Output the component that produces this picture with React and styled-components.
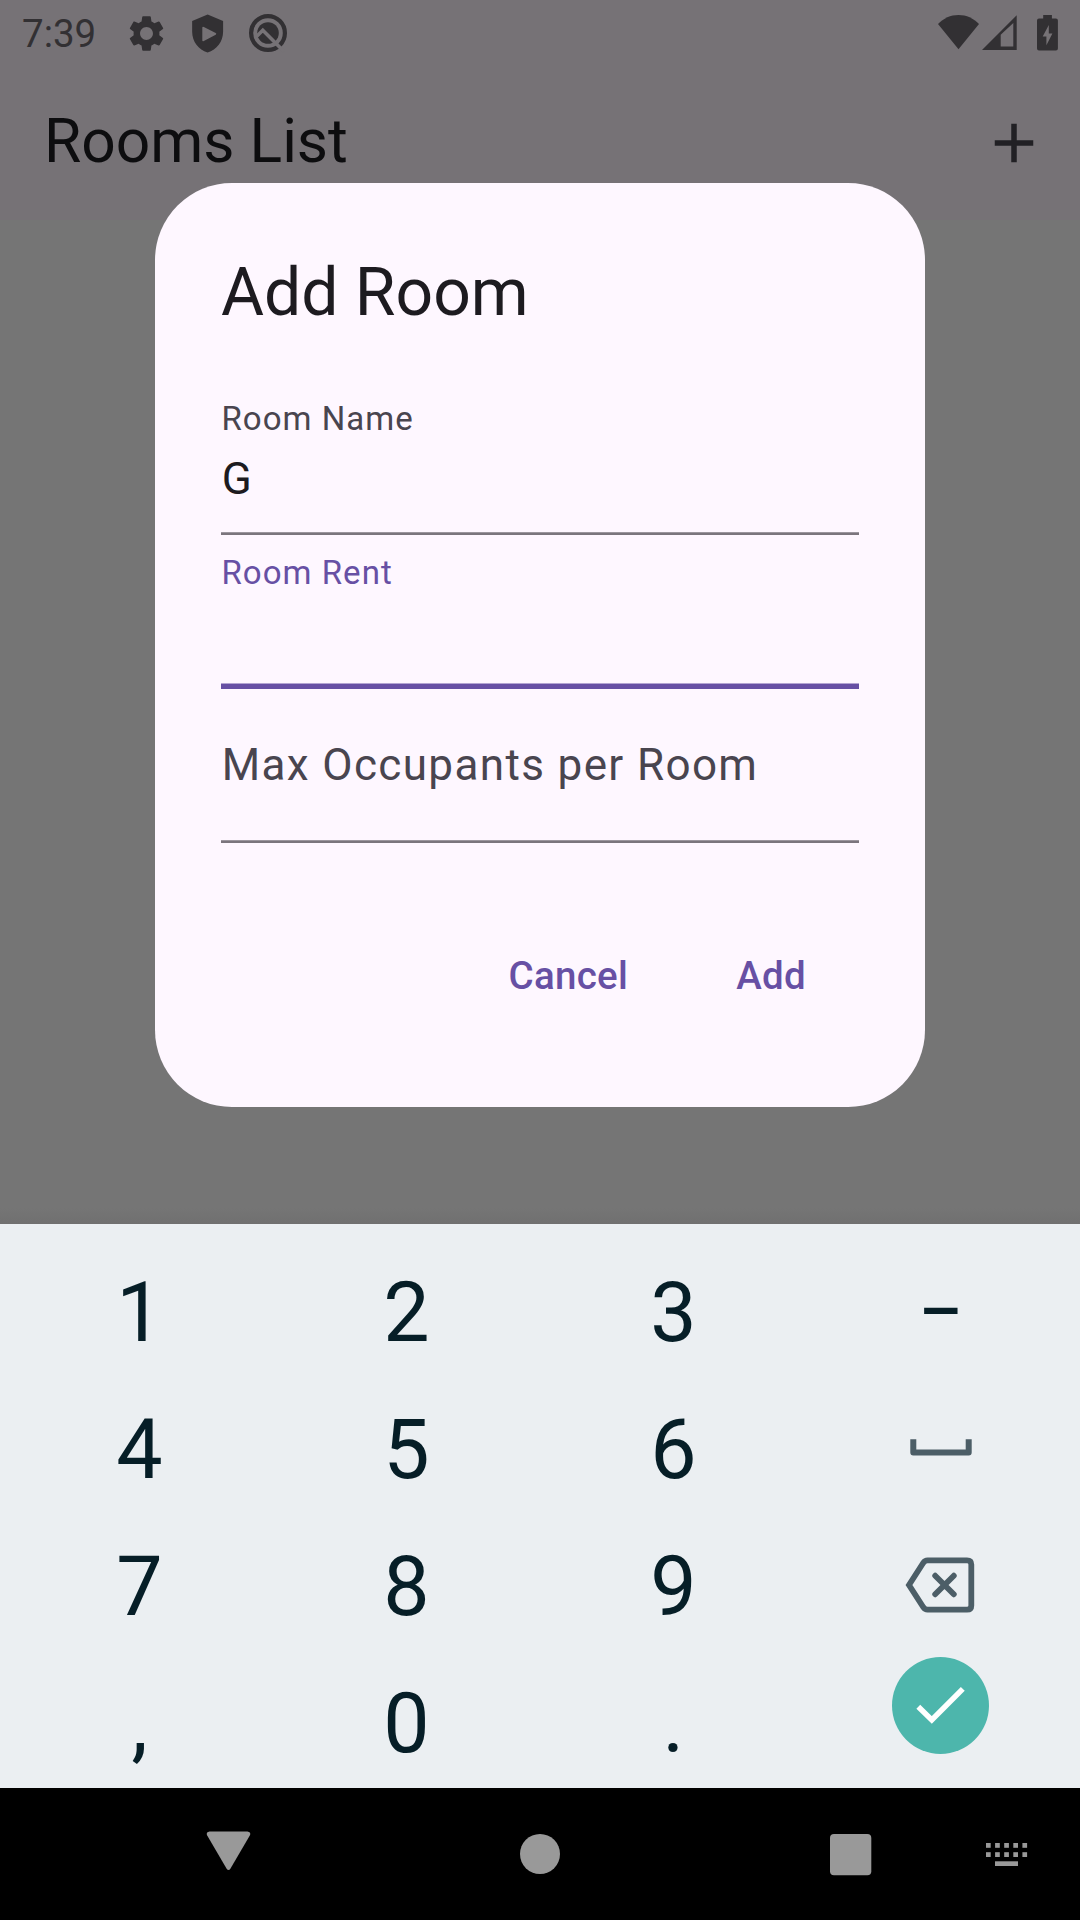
import React from "react";
import styled, { createGlobalStyle } from "styled-components";
import { MdAdd, MdSettings } from "react-icons/md";

const GlobalStyle = createGlobalStyle`
  *, *::before, *::after { box-sizing: border-box; }
  html, body { margin: 0; padding: 0; background: #000; }
  body { font-family: Roboto, "Liberation Sans", sans-serif; }
  button { font: inherit; border: 0; padding: 0; background: none; }
  svg { display: block; flex: none; }
`;

const Phone = styled.div`
  display: flex;
  flex-direction: column;
  width: 1080px;
  height: 1920px;
  overflow: hidden;
`;

const AppArea = styled.main`
  position: relative;
  display: flex;
  flex-direction: column;
  height: 1224px;
  background: #757575;
`;

const StatusBar = styled.div`
  display: flex;
  align-items: center;
  justify-content: space-between;
  height: 66px;
  padding: 0 22px;
  background: #767276;
  color: #323033;
`;

const StatusGroup = styled.div`
  display: flex;
  align-items: center;
  gap: ${(p) => p.$gap}px;
  padding: ${(p) => p.$pad || 0};
`;

const Clock = styled.time`
  width: 84px;
  font-size: 38.5px;
  line-height: 66px;
  padding-top: 1px;
`;

const TopBar = styled.header`
  display: flex;
  align-items: center;
  justify-content: space-between;
  height: 154px;
  padding: 0 33px 0 44px;
  background: #767276;
  color: #212024;
`;

const TopTitle = styled.h1`
  margin: 0;
  font-size: 60.5px;
  font-weight: 400;
  line-height: 76px;
  padding-bottom: 3px;
  color: #0d0d0f;
`;

const Body = styled.section`
  flex: 1;
  background: linear-gradient(#757575 calc(100% - 16px), #707070);
`;

const Overlay = styled.div`
  position: absolute;
  inset: 66px 0 0;
  display: flex;
  align-items: center;
  justify-content: center;
`;

const Dialog = styled.div`
  display: flex;
  flex-direction: column;
  width: 770px;
  padding: 66px;
  border-radius: 77px;
  background: #fef7ff;
`;

const DialogTitle = styled.h2`
  margin: 0 0 44px;
  font-size: 66px;
  font-weight: 400;
  line-height: 88px;
  color: #1d1b20;
`;

const Field = styled.div`
  display: flex;
  flex-direction: column;
  height: 154px;
  padding-top: ${(p) => (p.$resting ? 1 : 17)}px;
`;

const FloatingLabel = styled.label`
  font-size: 33px;
  line-height: 41px;
  letter-spacing: 1.03px;
  padding-left: 0.5px;
  color: ${(p) => (p.$active ? "#6750a4" : "#49454f")};
`;

const RestingLabel = styled.label`
  font-size: 44px;
  line-height: 150px;
  letter-spacing: 1.375px;
  padding-left: 0.7px;
  color: #49454f;
`;

const Value = styled.div`
  font-size: 44px;
  line-height: 78px;
  padding: 1px 0 0 0.7px;
  margin-bottom: -1px;
  letter-spacing: 1.375px;
  color: #1d1b20;
`;

const Underline = styled.div`
  flex: none;
  height: ${(p) => (p.$active ? 6 : 3)}px;
  margin-top: auto;
  background: ${(p) =>
    p.$active
      ? "linear-gradient(#b3a4d2 1px, #6750a4 1px)"
      : "linear-gradient(#9c969e 1px, #7b757d 1px)"};
`;

const Actions = styled.div`
  display: flex;
  justify-content: flex-end;
  gap: 22px;
  margin-top: 66px;
`;

const TextButton = styled.button`
  min-width: 176px;
  height: 132px;
  padding: 1px 33px 0;
  font-size: 38.5px;
  font-weight: 500;
  line-height: 131px;
  letter-spacing: 0.275px;
  color: #6750a4;
`;

const Keypad = styled.section`
  display: grid;
  grid-template-columns: repeat(4, 267px);
  grid-template-rows: 137px 137px 137px 129px;
  height: 564px;
  padding: 24px 6px 0;
  background: #ebeff2;
`;

const Key = styled.button`
  display: flex;
  align-items: center;
  justify-content: center;
  height: 129px;
  font-size: 82.5px;
  line-height: 129px;
  color: #061e27;
`;

const DashKey = styled.span`
  font-size: 67px;
  font-weight: 500;
  padding-bottom: 3px;
`;

const IconKey = styled.span`
  padding: ${(p) => p.$pad};
`;

const DoneCircle = styled.span`
  display: flex;
  align-items: center;
  justify-content: center;
  width: 97px;
  height: 97px;
  margin-bottom: 37px;
  border-radius: 50%;
  background: #4db6ac;
`;

const NavBar = styled.nav`
  display: grid;
  grid-template-columns: 385px 310px 291px 1fr;
  align-items: center;
  height: 132px;
  background: #000;
  color: #999;
`;

const NavSlot = styled.div`
  display: flex;
  justify-content: ${(p) => p.$align || "flex-start"};
  padding: ${(p) => p.$pad || 0};
`;

const ShieldPlay = () => (
  <svg width="41.25" height="41.25" viewBox="0 0 24 24" fill="currentColor" fillRule="evenodd">
    <path d="M12 .9 3 4.6v6.3c0 5.6 3.7 10.6 9 12.1 5.3-1.5 9-6.5 9-12.1V4.6zM9.8 8.1l6.9 3.6a.6.6 0 0 1 0 1l-6.9 3.6a.6.6 0 0 1-.9-.5V8.6a.6.6 0 0 1 .9-.5z" />
  </svg>
);

const TrackerIcon = () => (
  <svg width="42" height="41" viewBox="0 0 42 41" fill="none">
    <circle cx="21" cy="20" r="16.9" stroke="currentColor" strokeWidth="4.2" />
    <circle cx="21" cy="20" r="10.8" fill="currentColor" />
    <path d="M8 25 15.800 17.200 37 38.400" stroke="#767276" strokeWidth="3.600" />
  </svg>
);

const WifiIcon = () => (
  <svg width="41" height="36" viewBox="0 0 41 36" fill="currentColor">
    <path d="M20.500 34.200 0 9C5.500 3.300 12.500 0 20.500 0S35.500 3.300 41 9z" />
  </svg>
);

const SignalIcon = () => (
  <svg width="35" height="36" viewBox="0 0 35 36" fill="currentColor" fillRule="evenodd">
    <path d="M0 35 34.700.300V35zM18.700 19.800v11.700h12.600V8.100z" />
  </svg>
);

const BatteryIcon = () => (
  <svg width="21" height="36" viewBox="0 0 21 36" fill="currentColor" fillRule="evenodd">
    <path d="M6.200 0h8.700v3.500h4a2 2 0 0 1 2 2V33.500a2 2 0 0 1-2 2H2a2 2 0 0 1-2-2v-28a2 2 0 0 1 2-2h4.200zM11.800 10 5.700 21.500h3.700v8.700l6-11.600h-3.600z" />
  </svg>
);

const SpaceIcon = () => (
  <svg width="62" height="17" viewBox="0 0 62 17" fill="none" stroke="#4c5e67" strokeWidth="6" strokeLinejoin="round">
    <path d="M3.300 0.300v13.200h55.400V0.300" />
  </svg>
);

const BackspaceIcon = () => (
  <svg width="70" height="56" viewBox="0 0 70 56" fill="none" stroke="#4c5e67" strokeWidth="5.800">
    <path d="M4 28 18.300 5.800Q20 3.300 22.500 3.300H62Q66.300 3.300 66.300 7.500V48.500Q66.300 52.700 62 52.700H22.500Q20 52.700 18.300 50.200Z" />
    <path d="M30.200 18.700 48.800 37.300M48.800 18.700 30.200 37.300" strokeLinecap="round" />
  </svg>
);

const CheckIcon = () => (
  <svg width="49" height="38" viewBox="0 0 49 38" fill="none" stroke="#fff" strokeWidth="5.500">
    <path d="M2.300 20.800 15.800 33.900 46.800 2.900" />
  </svg>
);

const KEYS = [
  "1", "2", "3", <DashKey>–</DashKey>,
  "4", "5", "6", <IconKey $pad="0 0 5px"><SpaceIcon /></IconKey>,
  "7", "8", "9", <IconKey $pad="0 1px 3px 0"><BackspaceIcon /></IconKey>,
  ",", "0", ".", <DoneCircle><CheckIcon /></DoneCircle>,
];

export default function App() {
  return (
    <Phone>
      <GlobalStyle />
      <AppArea>
        <StatusBar>
          <StatusGroup $gap={19} $pad="1px 0 0">
            <Clock>7:39</Clock>
            <MdSettings size={43} />
            <ShieldPlay />
            <TrackerIcon />
          </StatusGroup>
          <StatusGroup $gap={20}>
            <StatusGroup $gap={3}>
              <WifiIcon />
              <SignalIcon />
            </StatusGroup>
            <BatteryIcon />
          </StatusGroup>
        </StatusBar>
        <TopBar>
          <TopTitle>Rooms List</TopTitle>
          <MdAdd size={66} />
        </TopBar>
        <Body />
        <Overlay>
          <Dialog role="dialog">
            <DialogTitle>Add Room</DialogTitle>
            <Field>
              <FloatingLabel>Room Name</FloatingLabel>
              <Value>G</Value>
              <Underline />
            </Field>
            <Field>
              <FloatingLabel $active>Room Rent</FloatingLabel>
              <Underline $active />
            </Field>
            <Field $resting>
              <RestingLabel>Max Occupants per Room</RestingLabel>
              <Underline />
            </Field>
            <Actions>
              <TextButton>Cancel</TextButton>
              <TextButton>Add</TextButton>
            </Actions>
          </Dialog>
        </Overlay>
      </AppArea>
      <Keypad>
        {KEYS.map((key, i) => (
          <Key key={i}>{key}</Key>
        ))}
      </Keypad>
      <NavBar>
        <NavSlot $pad="0 0 7px 206px">
          <svg width="45" height="40" viewBox="0 0 45 40" fill="currentColor">
            <path d="M3.500.5h38q4 .5 2.300 4L24.500 37.500q-2 3-4 0L1.200 4.500Q-.500 1 3.500.500z" />
          </svg>
        </NavSlot>
        <NavSlot $align="center">
          <svg width="40" height="40" viewBox="0 0 40 40" fill="currentColor">
            <circle cx="20" cy="20" r="20" />
          </svg>
        </NavSlot>
        <NavSlot $pad="1px 0 0 135px">
          <svg width="42" height="42" viewBox="0 0 42 42" fill="currentColor">
            <rect x="0" y="0" width="41.300" height="41.300" rx="4" />
          </svg>
        </NavSlot>
        <NavSlot $pad="2px 0 0">
          <svg width="42" height="24" viewBox="0 0 42 24" fill="currentColor">
            {[0, 9.1, 18.2, 27.3, 36.4].map((x) => (
              <React.Fragment key={x}>
                <rect x={x} y="0" width="4.7" height="4.8" />
                <rect x={x} y="9.2" width="4.7" height="4.8" />
              </React.Fragment>
            ))}
            <rect x="9" y="18.3" width="23" height="4.7" />
          </svg>
        </NavSlot>
      </NavBar>
    </Phone>
  );
}
